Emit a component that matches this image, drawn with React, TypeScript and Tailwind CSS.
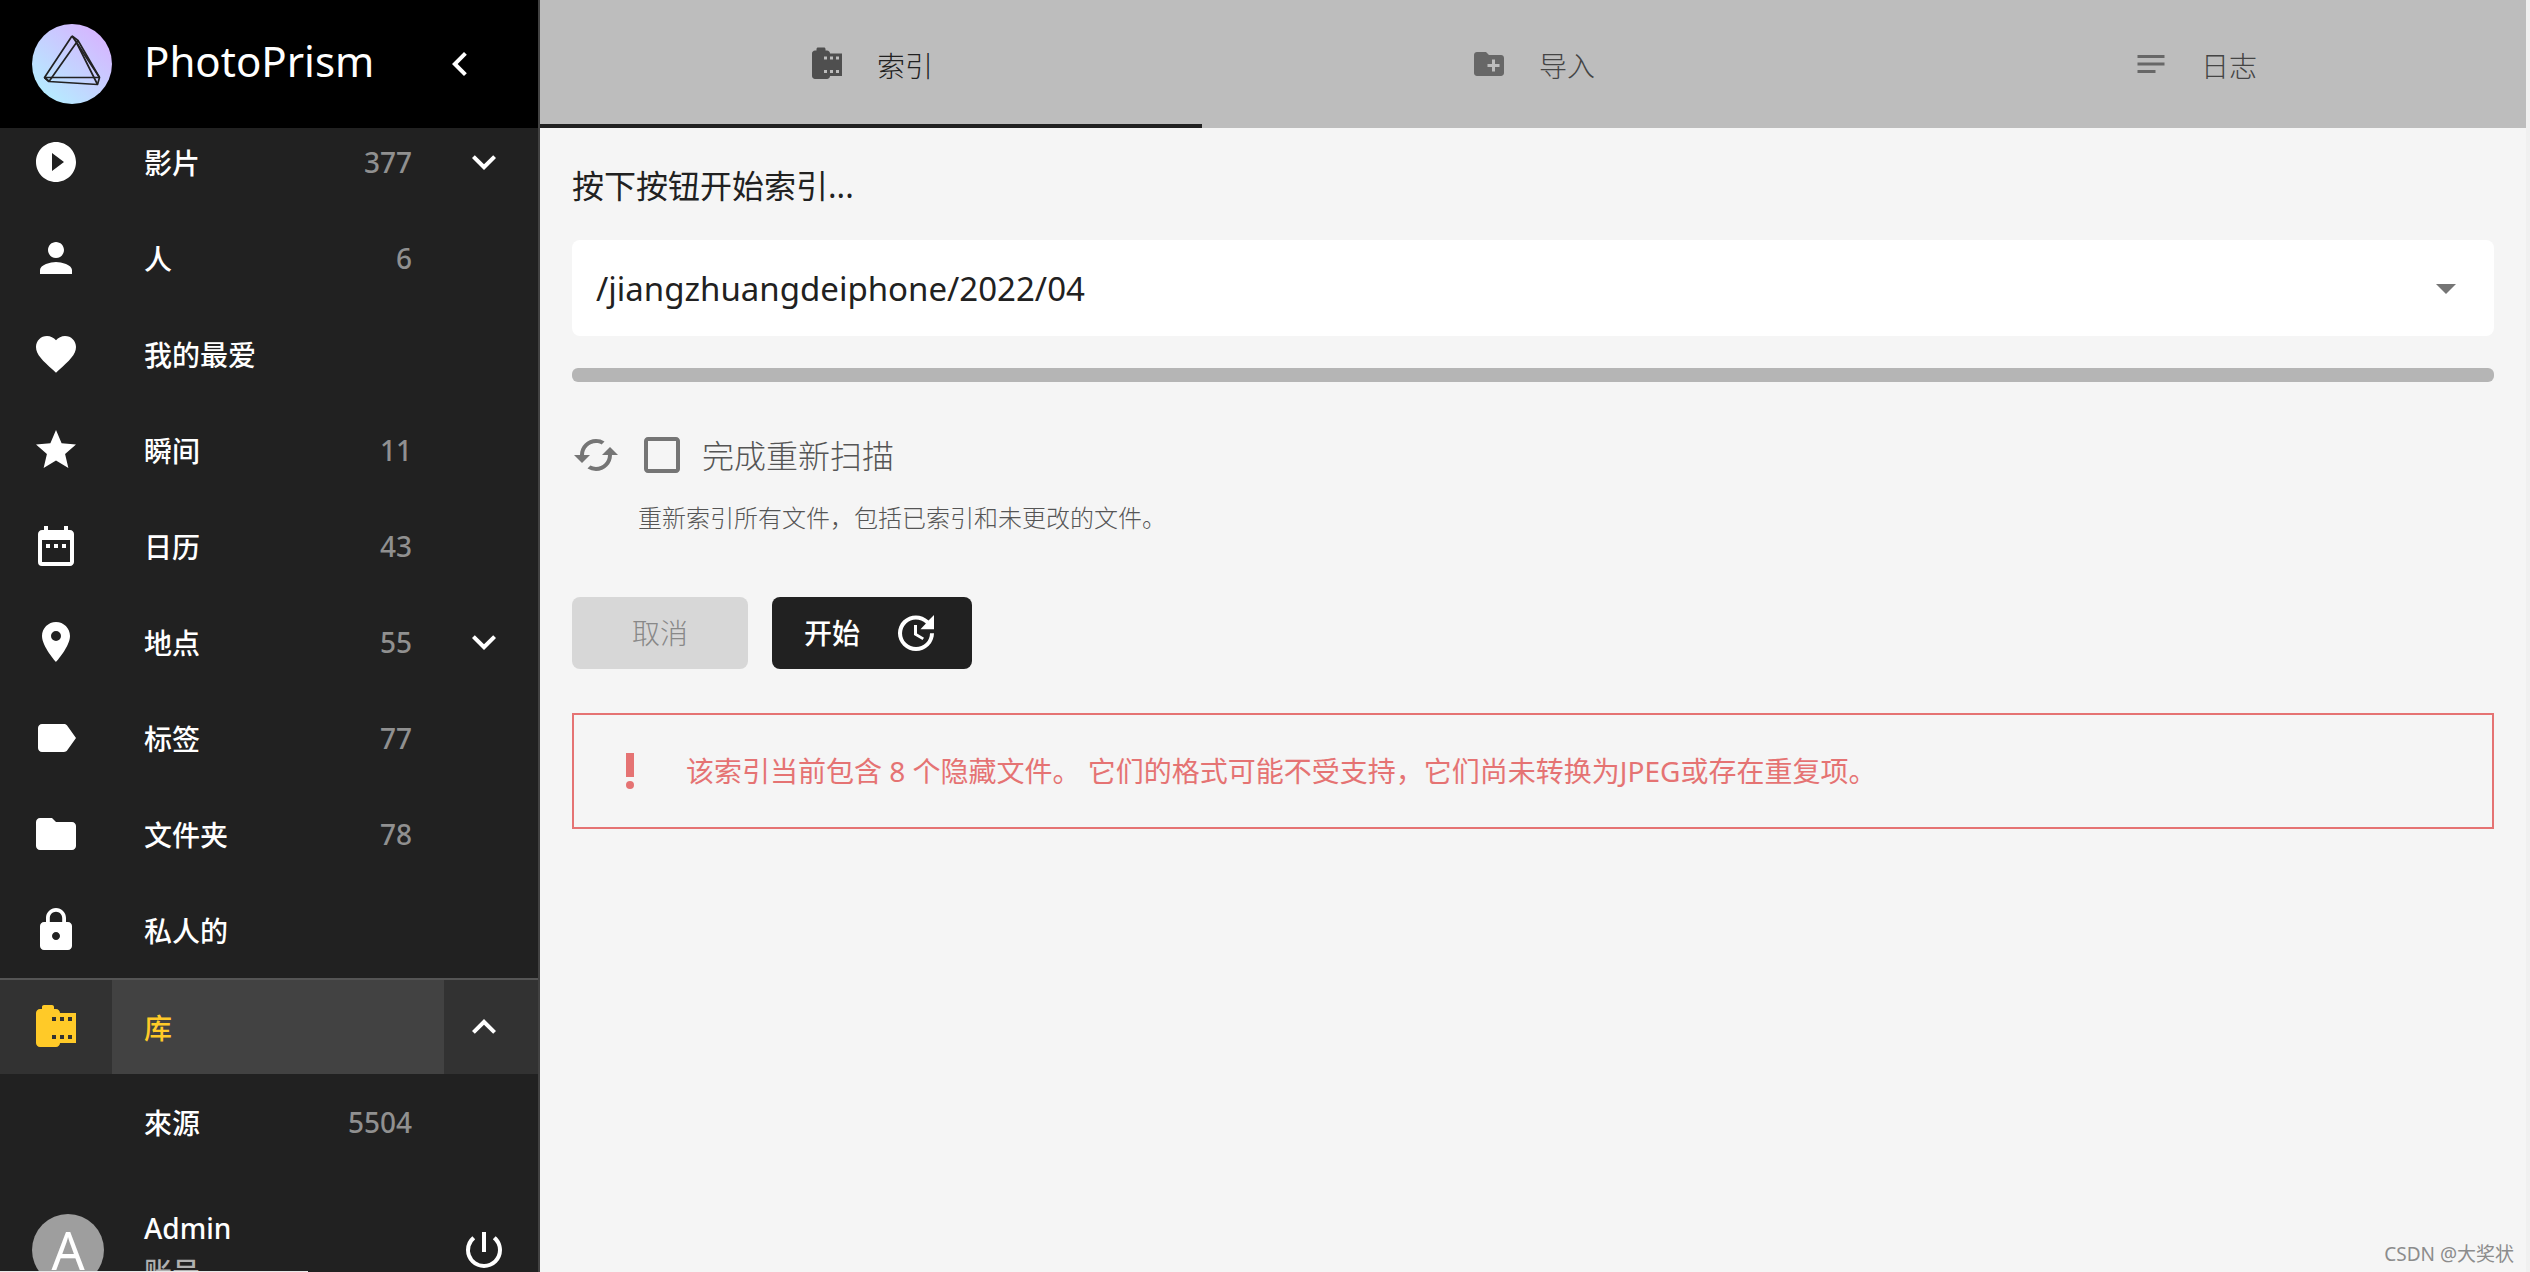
import React, { useState } from 'react';
import {
  MdArrowDropDown,
  MdCached,
  MdCameraRoll,
  MdCheckBox,
  MdCheckBoxOutlineBlank,
  MdChevronLeft,
  MdCreateNewFolder,
  MdDateRange,
  MdExpandLess,
  MdExpandMore,
  MdFavorite,
  MdFolder,
  MdLabel,
  MdLock,
  MdNotes,
  MdPerson,
  MdPlace,
  MdPlayCircleFilled,
  MdPowerSettingsNew,
  MdPriorityHigh,
  MdStar,
  MdUpdate,
} from 'react-icons/md';
import { IconType } from 'react-icons';

interface NavItem {
  label: string;
  icon?: IconType;
  count?: number;
  toggle?: 'more' | 'less';
  active?: boolean;
}

const navItems: NavItem[] = [
  { label: '影片', icon: MdPlayCircleFilled, count: 377, toggle: 'more' },
  { label: '人', icon: MdPerson, count: 6 },
  { label: '我的最爱', icon: MdFavorite },
  { label: '瞬间', icon: MdStar, count: 11 },
  { label: '日历', icon: MdDateRange, count: 43 },
  { label: '地点', icon: MdPlace, count: 55, toggle: 'more' },
  { label: '标签', icon: MdLabel, count: 77 },
  { label: '文件夹', icon: MdFolder, count: 78 },
  { label: '私人的', icon: MdLock },
  { label: '库', icon: MdCameraRoll, toggle: 'less', active: true },
  { label: '來源', count: 5504 },
];

const tabs = [
  { label: '索引', icon: MdCameraRoll },
  { label: '导入', icon: MdCreateNewFolder },
  { label: '日志', icon: MdNotes },
];

const Logo = () => (
  <svg viewBox="0 0 80 80" className="size-20 shrink-0" aria-hidden="true">
    <defs>
      <linearGradient id="prism" x1="0.15" y1="0.9" x2="0.85" y2="0.1">
        <stop offset="0" stopColor="#b5ecff" />
        <stop offset="1" stopColor="#d6b5ff" />
      </linearGradient>
    </defs>
    <circle cx="40" cy="40" r="40" fill="url(#prism)" />
    <g fill="none" stroke="#222" strokeWidth="1.7" strokeLinejoin="round">
      <path d="M40 12 12.5 53.5H67.5" />
      <path d="M40 12 46 16.5 67.5 53.5 65.5 60.5 17 57.5 12.5 53.5" />
      <path d="M17 57.5 44.5 18.5 67.5 53.5" />
      <path d="M40 12 44.5 18.5 65.5 60.5M46 16.5l-1.5 2M12.5 53.5l4.5 4" />
    </g>
  </svg>
);

const NavRow: React.FC<{ item: NavItem }> = ({ item }) => {
  const Icon = item.icon;
  const Toggle = item.toggle === 'less' ? MdExpandLess : MdExpandMore;

  return (
    <li
      className={`flex h-24 items-stretch ${
        item.active ? 'border-t-2 border-[#555] bg-[#323232] text-[#ffca28]' : 'text-white'
      }`}
    >
      <a href="#" className="flex flex-1 items-stretch">
        <span className="flex w-28 items-center pl-8">{Icon && <Icon size={48} />}</span>
        <span
          className={`flex flex-1 items-center justify-between px-8 ${item.active ? 'bg-[#424242]' : ''}`}
        >
          <span className="pt-0.5">{item.label}</span>
          {item.count !== undefined && <span className="text-[#909090]">{item.count}</span>}
        </span>
      </a>
      <span className="flex w-[94px] items-center pl-4">
        {item.toggle && (
          <button type="button" aria-label={item.label} className="text-white">
            <Toggle size={48} />
          </button>
        )}
      </span>
    </li>
  );
};

const Sidebar = () => (
  <aside className="flex h-screen w-[540px] shrink-0 flex-col overflow-hidden border-r-2 border-[#424242] bg-[#212121] text-[28px] font-medium text-white">
    <header className="z-10 flex h-32 shrink-0 items-center bg-black pl-8">
      <Logo />
      <h1 className="flex-1 pb-2 pl-8 text-[42px] font-normal">PhotoPrism</h1>
      <button type="button" aria-label="收起" className="mr-[54px]">
        <MdChevronLeft size={48} />
      </button>
    </header>
    {/* list is scrolled slightly under the header */}
    <ul className="-mt-3.5 shrink-0">
      {navItems.map((item) => (
        <NavRow key={item.label} item={item} />
      ))}
    </ul>
    <div className="flex shrink-0 items-center pt-9 pr-[30px] pl-8">
      <div className="flex size-[72px] items-center justify-center rounded-full bg-[#9e9e9e] text-[52px] font-normal">
        A
      </div>
      <div className="flex-1 pl-10 leading-[44px]">
        <div>Admin</div>
        <div className="text-[#b0b0b0]">账号</div>
      </div>
      <button type="button" aria-label="登出">
        <MdPowerSettingsNew size={48} />
      </button>
    </div>
  </aside>
);

const App = () => {
  const [tab, setTab] = useState(0);
  const [rescan, setRescan] = useState(false);
  const CheckIcon = rescan ? MdCheckBox : MdCheckBoxOutlineBlank;

  return (
    <div
      lang="zh-CN"
      className="relative flex h-screen overflow-hidden bg-[#f0f0f0] pr-1 font-['Noto_Sans','Noto_Sans_CJK_SC',sans-serif] text-[28px]"
    >
      <Sidebar />
      <main className="flex-1 bg-[#f5f5f5] font-light">
        <div role="tablist" className="grid h-32 grid-cols-3 bg-[#bdbdbd]">
          {tabs.map(({ label, icon: Icon }, i) => (
            <button
              key={label}
              type="button"
              role="tab"
              aria-selected={tab === i}
              onClick={() => setTab(i)}
              className={`flex items-center justify-center gap-8 border-b-4 pt-1 ${
                tab === i ? 'border-[#212121] text-[#212121]' : 'border-transparent text-[#444]'
              }`}
            >
              <Icon size={36} className="opacity-70" />
              <span className="pt-1">{label}</span>
            </button>
          ))}
        </div>

        <div className="px-8 pt-[34px]">
          <p className="text-[32px] leading-[48px] font-normal text-[#212121]">按下按钮开始索引...</p>

          <div className="relative mt-[30px]">
            <select
              aria-label="文件夹"
              className="h-24 w-full appearance-none rounded-lg bg-white px-6 pt-0.5 text-[33px] font-normal text-[#212121]"
            >
              <option>/jiangzhuangdeiphone/2022/04</option>
            </select>
            <MdArrowDropDown
              size={48}
              className="pointer-events-none absolute top-6 right-6 text-[#757575]"
            />
          </div>

          <div role="progressbar" aria-label="索引" className="mt-8 h-3.5 rounded-md bg-[#b5b5b5]" />

          <label className="mt-12 flex items-center text-[32px] leading-[48px] text-[#555]">
            <MdCached size={48} className="text-[#757575]" />
            <input
              type="checkbox"
              checked={rescan}
              onChange={(e) => setRescan(e.target.checked)}
              className="sr-only"
            />
            <CheckIcon size={48} className="mr-4 ml-[18px] text-[#757575]" />
            <span className="pt-0.5">完成重新扫描</span>
          </label>
          <p className="mt-[22px] pl-[66px] text-2xl text-[#555]">
            重新索引所有文件，包括已索引和未更改的文件。
          </p>

          <div className="mt-[63px] flex gap-6">
            <button
              type="button"
              disabled
              className="h-[72px] w-44 rounded-lg bg-[#d7d7d7] text-[#888]"
            >
              取消
            </button>
            <button
              type="button"
              className="flex h-[72px] items-center gap-8 rounded-lg bg-[#212121] px-8 font-medium text-white"
            >
              开始
              <MdUpdate size={48} />
            </button>
          </div>

          <div
            role="alert"
            className="mt-11 flex h-[116px] items-center gap-8 border-2 border-[#e57373] px-8 font-normal text-[#e57373]"
          >
            <MdPriorityHigh size={48} />
            <p>该索引当前包含 8 个隐藏文件。 它们的格式可能不受支持，它们尚未转换为JPEG或存在重复项。</p>
          </div>
        </div>
      </main>

      <div className="absolute bottom-0 left-0 h-px w-[308px] bg-[#e8e8e8]" />
      <div className="absolute right-4 bottom-1 text-[19px] text-[#8c8c8c]">CSDN @大奖状</div>
    </div>
  );
};

export default App;
